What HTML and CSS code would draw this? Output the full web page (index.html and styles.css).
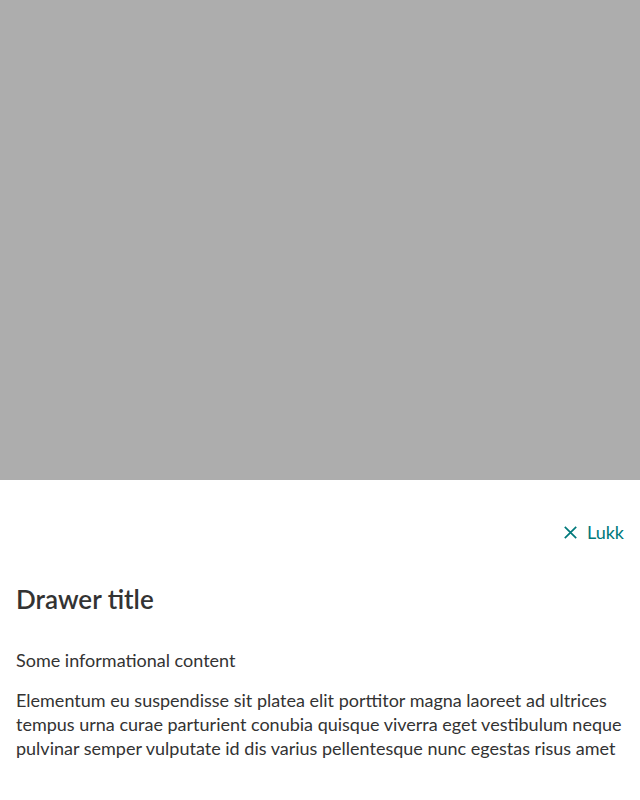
FILE: index.html
```html
<!DOCTYPE html>
<html lang="no">
<head>
<meta charset="utf-8">
<link rel="stylesheet" href="styles.css">
</head>
<body>
<div class="page">
  <div class="overlay"></div>
  <section class="drawer">
    <div class="drawer-head">
      <button class="close" type="button">
        <svg width="13" height="13" viewBox="0 0 13 13" aria-hidden="true"><path d="M0.8 0.8L12.2 12.2M12.2 0.8L0.8 12.2" stroke="currentColor" stroke-width="1.7" fill="none"/></svg>
        <span>Lukk</span>
      </button>
    </div>
    <h2 class="title">Drawer title</h2>
    <p class="info">Some informational content</p>
    <p class="body">Elementum eu suspendisse sit platea elit porttitor magna laoreet ad ultrices tempus urna curae parturient conubia quisque viverra eget vestibulum neque pulvinar semper vulputate id dis varius pellentesque nunc egestas risus amet</p>
  </section>
</div>
</body>
</html>
```
FILE: styles.css
```css
html, body { margin: 0; padding: 0; }
body { font-family: Lato, "Open Sans", sans-serif; color: #333; }
.page { display: flex; flex-direction: column; height: 800px; width: 640px; }
.overlay { height: 480px; background: #adadad; }
.drawer { flex: 1; background: #fff; padding: 0 16px; box-sizing: border-box; }
.drawer-head { display: flex; justify-content: flex-end; padding-top: 40px; height: 24px; }
.close { display: flex; align-items: center; gap: 10px; background: none; border: 0; padding: 0; color: #00797b; font-family: inherit; font-size: 18px; line-height: 24px; cursor: pointer; }
.title { margin: 39px 0 0; font-size: 26px; line-height: 32px; font-weight: 600; color: #333; }
.info { margin: 33px 0 0; font-size: 18px; line-height: 24px; }
.body { margin: 16px 0 0; font-size: 18px; line-height: 24px; }
```
